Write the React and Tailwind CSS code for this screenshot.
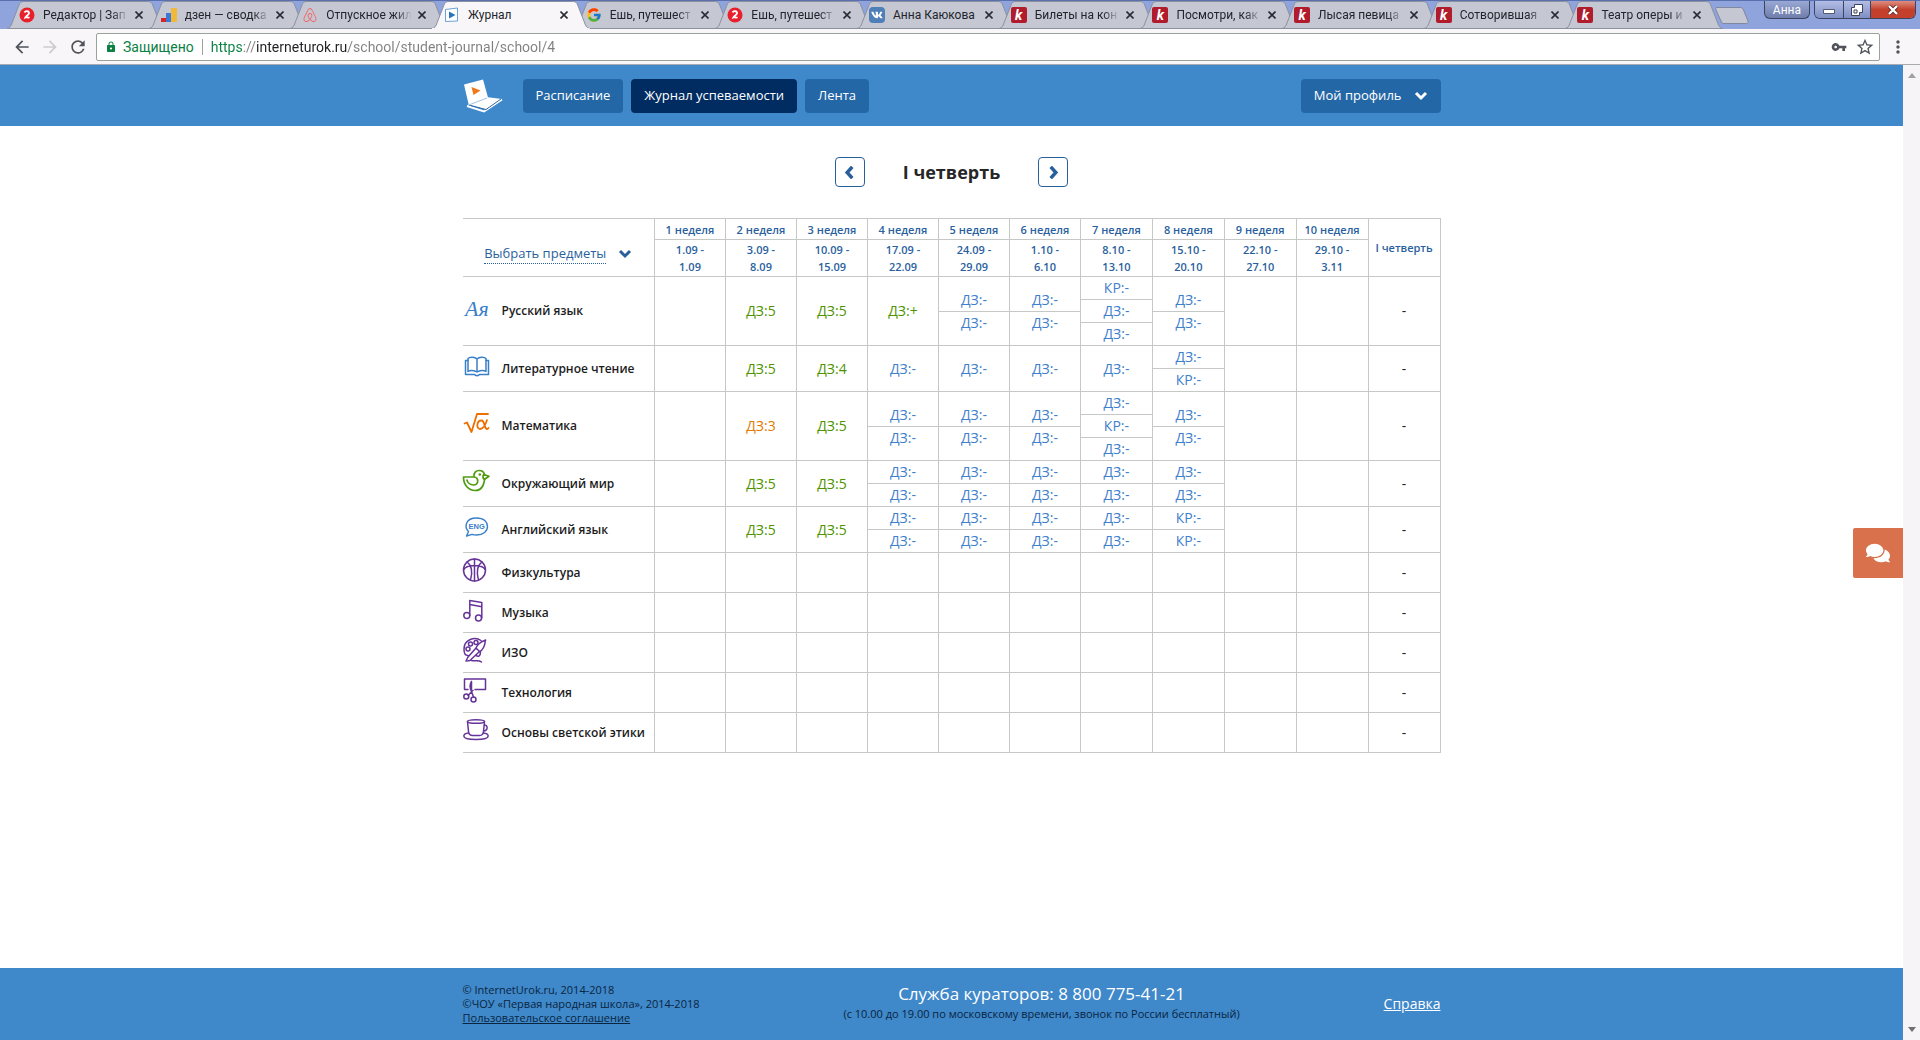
import React from 'react';
import { FcGoogle } from 'react-icons/fc';
import { FaAirbnb, FaComments, FaVk } from 'react-icons/fa';
import {
  MdArrowBack,
  MdArrowForward,
  MdLock,
  MdMoreVert,
  MdRefresh,
  MdStarBorder,
  MdVpnKey,
} from 'react-icons/md';

const browserTabs = [
  { icon: 'zen', title: 'Редактор | Зап', long: true },
  { icon: 'stats', title: 'дзен — сводка', long: true },
  { icon: 'airbnb', title: 'Отпускное жил', long: true },
  { icon: 'journal', title: 'Журнал', active: true },
  { icon: 'google', title: 'Ешь, путешест', long: true },
  { icon: 'zen', title: 'Ешь, путешест', long: true },
  { icon: 'vk', title: 'Анна Каюкова' },
  { icon: 'kudago', title: 'Билеты на кон', long: true },
  { icon: 'kudago', title: 'Посмотри, как', long: true },
  { icon: 'kudago', title: 'Лысая певица', long: true },
  { icon: 'kudago', title: 'Сотворившая', long: true },
  { icon: 'kudago', title: 'Театр оперы и', long: true },
];

const weeks = [
  { name: '1 неделя', from: '1.09 -', to: '1.09' },
  { name: '2 неделя', from: '3.09 -', to: '8.09' },
  { name: '3 неделя', from: '10.09 -', to: '15.09' },
  { name: '4 неделя', from: '17.09 -', to: '22.09' },
  { name: '5 неделя', from: '24.09 -', to: '29.09' },
  { name: '6 неделя', from: '1.10 -', to: '6.10' },
  { name: '7 неделя', from: '8.10 -', to: '13.10' },
  { name: '8 неделя', from: '15.10 -', to: '20.10' },
  { name: '9 неделя', from: '22.10 -', to: '27.10' },
  { name: '10 неделя', from: '29.10 -', to: '3.11' },
];

const DZ = 'ДЗ:-';
const KR = 'КР:-';

const subjects = [
  {
    name: 'Русский язык',
    icon: 'russian',
    height: 'h-[69px]',
    marks: [[], ['ДЗ:5'], ['ДЗ:5'], ['ДЗ:+'], [DZ, DZ], [DZ, DZ], [KR, DZ, DZ], [DZ, DZ], [], []],
  },
  {
    name: 'Литературное чтение',
    icon: 'book',
    height: 'h-[46px]',
    marks: [[], ['ДЗ:5'], ['ДЗ:4'], [DZ], [DZ], [DZ], [DZ], [DZ, KR], [], []],
  },
  {
    name: 'Математика',
    icon: 'math',
    height: 'h-[69px]',
    marks: [[], ['ДЗ:3'], ['ДЗ:5'], [DZ, DZ], [DZ, DZ], [DZ, DZ], [DZ, KR, DZ], [DZ, DZ], [], []],
  },
  {
    name: 'Окружающий мир',
    icon: 'bird',
    height: 'h-[46px]',
    marks: [[], ['ДЗ:5'], ['ДЗ:5'], [DZ, DZ], [DZ, DZ], [DZ, DZ], [DZ, DZ], [DZ, DZ], [], []],
  },
  {
    name: 'Английский язык',
    icon: 'english',
    height: 'h-[46px]',
    marks: [[], ['ДЗ:5'], ['ДЗ:5'], [DZ, DZ], [DZ, DZ], [DZ, DZ], [DZ, DZ], [KR, KR], [], []],
  },
  { name: 'Физкультура', icon: 'ball', height: 'h-[40px]', marks: Array(10).fill([]) },
  { name: 'Музыка', icon: 'music', height: 'h-[40px]', marks: Array(10).fill([]) },
  { name: 'ИЗО', icon: 'art', height: 'h-[40px]', marks: Array(10).fill([]) },
  { name: 'Технология', icon: 'craft', height: 'h-[40px]', marks: Array(10).fill([]) },
  { name: 'Основы светской этики', icon: 'cup', height: 'h-[40px]', marks: Array(10).fill([]) },
];

function markColor(mark) {
  if (mark.endsWith('-')) return 'text-[#3f80cc]';
  if (mark.endsWith('3')) return 'text-[#e07b00]';
  return 'text-[#4f9400]';
}

function Chevron({ className, d = 'M2 3l5 5 5-5' }) {
  return (
    <svg viewBox="0 0 14 11" className={className} fill="none" stroke="currentColor" strokeWidth="3">
      <path d={d} />
    </svg>
  );
}

function Favicon({ name }) {
  switch (name) {
    case 'zen':
      return (
        <svg viewBox="0 0 16 16" className="size-4 shrink-0">
          <circle cx="8" cy="8" r="7.5" fill="#e8202c" />
          <path d="M5.500 5.500c1-2 5-1.600 4.500.9C9.700 8 7 8.300 6.300 10.500c1.500-.8 2.500.8 4.200-.2" fill="none" stroke="#fff" strokeWidth="1.800" />
        </svg>
      );
    case 'stats':
      return (
        <svg viewBox="0 0 16 16" className="size-4 shrink-0">
          <path d="M0 11h5v4H0z" fill="#d8232a" />
          <path d="M5 6h5v9H5z" fill="#3b78d8" />
          <path d="M10 1h6v14h-6z" fill="#f0b93a" />
        </svg>
      );
    case 'airbnb':
      return <FaAirbnb className="size-4 shrink-0 text-[#f0686c]" />;
    case 'journal':
      return (
        <svg viewBox="0 0 16 16" className="size-4 shrink-0">
          <path d="M1.500 2.500l12-1.500v13l-12 .5z" fill="#fff" stroke="#6ba3d8" />
          <path d="M5 4.500l6.500 3.500L5 11.500z" fill="#2b72b8" />
        </svg>
      );
    case 'google':
      return <FcGoogle className="size-4 shrink-0" />;
    case 'vk':
      return (
        <span className="flex size-4 shrink-0 items-center justify-center rounded-sm bg-[#4f7fb8]">
          <FaVk className="size-3 text-white" />
        </span>
      );
    default:
      return (
        <span className="flex size-4 shrink-0 items-center justify-center rounded-xs bg-[#b01c2c] pb-px text-sm/4 font-bold text-white italic">
          k
        </span>
      );
  }
}

function BrowserTab({ tab }) {
  return (
    <div className={`relative h-7 min-w-0 flex-1 ${tab.active ? 'z-10' : ''}`}>
      <svg
        viewBox="0 0 158 28"
        preserveAspectRatio="none"
        className="absolute top-0 -left-2 h-full w-[calc(100%+16px)]"
      >
        <path
          d="M0 27.500C3 27 4 25 5 22L12 4C13 1.500 14 .5 17 .5H141C144 .5 145 1.500 146 4L153 22C154 25 155 27 158 27.500"
          fill={tab.active ? '#f8f6f9' : '#c5c8d2'}
          stroke="#8b90a0"
        />
        <path d="M0 27.500H158" stroke={tab.active ? '#f8f6f9' : '#8b90a0'} />
      </svg>
      <div className="relative flex h-full items-center pr-3 pl-1">
        <button className="flex min-w-0 flex-1 items-center gap-2 text-left text-xs text-[#22242c]">
          <Favicon name={tab.icon} />
          <span className={`flex-1 whitespace-nowrap ${tab.long ? 'mask-r-from-80%' : ''}`}>{tab.title}</span>
        </button>
        <button aria-label="Закрыть вкладку" className="ml-1 flex size-3 items-center justify-center">
          <svg viewBox="0 0 8 8" className="size-2" stroke="#2a2c34" strokeWidth="1.600">
            <path d="M.5.5l7 7M7.500.5l-7 7" />
          </svg>
        </button>
      </div>
    </div>
  );
}

function WindowControls() {
  return (
    <div className="ml-auto flex items-start gap-1 pr-1">
      <button className="h-[18px] rounded-b-md border border-t-0 border-[#3c4460] bg-linear-to-b from-[#9aa8d4] to-[#6f7dac] px-2 text-xs/4 text-white">
        Анна
      </button>
      <div className="flex h-[18px] overflow-hidden rounded-b-md border border-t-0 border-[#3c4460]">
        <button aria-label="Свернуть" className="flex w-7 items-center justify-center bg-linear-to-b from-[#b3bee4] to-[#7f8fc4]">
          <svg viewBox="0 0 12 5" className="mt-1 h-[5px] w-3">
            <path d="M.5.5h11v4H.5z" fill="#fff" stroke="#555c70" />
          </svg>
        </button>
        <button aria-label="Развернуть" className="flex w-7 items-center justify-center border-x border-[#3c4460] bg-linear-to-b from-[#b3bee4] to-[#7f8fc4]">
          <svg viewBox="0 0 12 12" className="size-3" fill="none" stroke="#3c4460">
            <path d="M3.500.5h8v8h-3v3h-8v-8h3z" fill="#fff" />
            <path d="M3 6h3v3H3z" />
          </svg>
        </button>
        <button aria-label="Закрыть" className="flex w-11 items-center justify-center bg-linear-to-b from-[#dd8d80] via-[#c4402c] to-[#c4402c]">
          <svg viewBox="0 0 12 10" className="h-[10px] w-3">
            <path d="M2 1l8 8M10 1l-8 8" stroke="#5c2a2a" strokeWidth="4" />
            <path d="M2 1l8 8M10 1l-8 8" stroke="#fff" strokeWidth="2.400" />
          </svg>
        </button>
      </div>
    </div>
  );
}

function BrowserChrome() {
  return (
    <div className="font-['Roboto','Liberation_Sans',sans-serif]">
      <div className="flex border-t border-[#5a6fae] bg-[#8fa3dc] pl-[15px]">
        <div className="flex max-w-[1700px] flex-1">
          {browserTabs.map((tab, i) => (
            <BrowserTab key={i} tab={tab} />
          ))}
        </div>
        <button aria-label="Новая вкладка" className="self-center">
          <svg viewBox="0 0 34 17" className="h-[17px] w-[34px]">
            <path d="M2 .5h23c2 0 3 1 3.500 2.500l4.500 11c.5 1.500 0 2.500-1.500 2.500H9c-2 0-2.500-1-3-2.500L1 3C.5 1.500.5.5 2 .5z" fill="#c5c8d2" stroke="#8088a0" />
          </svg>
        </button>
        <WindowControls />
      </div>

      <div className="flex h-9 items-center border-b border-[#a8acb0] bg-[#f8f6f9] text-[#50535a]">
        <button aria-label="Назад" className="ml-3">
          <MdArrowBack className="size-5" />
        </button>
        <button aria-label="Вперёд" className="ml-2 text-[#cccccf]">
          <MdArrowForward className="size-5" />
        </button>
        <button aria-label="Обновить" className="ml-2">
          <MdRefresh className="size-5" />
        </button>
        <div className="ml-2 flex h-7 flex-1 items-center rounded-xs border border-[#9aa39a] bg-white pr-1 pl-2 text-sm">
          <MdLock className="size-3 text-[#0b8043]" />
          <span className="ml-1.5 text-[#0b8043]">Защищено</span>
          <span className="mx-2 h-4 w-px bg-[#a0a0a0]" />
          <input
            aria-label="Адресная строка"
            defaultValue="https://interneturok.ru/school/student-journal/school/4"
            className="min-w-0 flex-1 bg-[linear-gradient(90deg,#0b8043_0_32px,#808080_32px_46px,#202124_46px_137px,#808080_137px)] bg-clip-text text-transparent outline-none"
          />
          <MdVpnKey className="size-4" />
          <MdStarBorder className="ml-2 size-5" />
        </div>
        <button aria-label="Меню" className="mr-3 ml-2">
          <MdMoreVert className="size-5" />
        </button>
      </div>
    </div>
  );
}

function Scrollbar() {
  return (
    <div className="flex w-[17px] shrink-0 flex-col items-center justify-between bg-[#f6f4f7] py-1">
      <svg viewBox="0 0 8 5" className="mt-1 h-[5px] w-2">
        <path d="M0 5l4-5 4 5z" fill="#a0a0a4" />
      </svg>
      <svg viewBox="0 0 8 5" className="mb-1 h-[5px] w-2">
        <path d="M0 0l4 5 4-5z" fill="#707074" />
      </svg>
    </div>
  );
}

function SubjectIcon({ name }) {
  const common = {
    viewBox: '0 0 26 26',
    className: 'size-[26px] overflow-visible',
    fill: 'none',
    strokeWidth: 1.5,
    strokeLinejoin: 'round',
    strokeLinecap: 'round',
  };
  switch (name) {
    case 'russian':
      return (
        <svg {...common}>
          <text x="2" y="21" fill="#3a80c8" fontSize="22" fontStyle="italic" fontWeight="400" fontFamily="'Liberation Serif', serif">
            Ая
          </text>
        </svg>
      );
    case 'book':
      return (
        <svg {...common} stroke="#3a80c8">
          <path d="M14 6c2-2 7-2.500 9-.5v13c-2-1.500-6-1.500-9 .5-3-2-7-2-9-.5v-13c2-2 7-1.500 9 .5zM14 6v13" />
          <path d="M5 7.500H2.500v14h9c1 1.500 4 1.500 5 0h9v-14H23" />
        </svg>
      );
    case 'math':
      return (
        <svg {...common} stroke="#ee6f00" strokeWidth="1.800">
          <path d="M1.500 13.500l2.500-1 4.500 9.500L14 4h11" />
          <path d="M24 10c-1.500 5-4 9-7 9-4 0-3.500-8.500 1.500-8.500 3.500 0 2.500 8.500 5.500 8.500.8 0 1.200-.5 1.500-1" />
        </svg>
      );
    case 'bird':
      return (
        <svg {...common} stroke="#4f9c10" strokeWidth="1.700">
          <path d="M11 8.500C10.500 5 13 2.500 16.200 2.500c3 0 5 2 5.500 4.500.2 8-2 15.500-9.500 15.500C5 22.500.5 16.500.5 9H11c5 0 5 8-.5 8-3.500 0-6-2.500-6.500-5" />
          <path d="M20.500 6.500l5.500 1.800-4.700 3.200c-1.500-1.500-1.500-3.500-.8-5z" fill="#fff" />
          <circle cx="16.800" cy="6.500" r=".5" fill="#4f9c10" />
        </svg>
      );
    case 'english':
      return (
        <svg {...common} stroke="#3a80c8" strokeWidth="1.400">
          <path d="M5.500 17.500C1 13 2.500 4 13.500 4 21 4 24.500 8 24.500 12.500S20.500 21 13.500 21c-2 0-3-.2-4.500-.7L3.500 22z" />
          <text x="5.500" y="15.300" fill="#3a80c8" stroke="none" fontSize="7.500" fontWeight="700" fontFamily="'Liberation Sans', sans-serif">
            ENG
          </text>
        </svg>
      );
    case 'ball':
      return (
        <svg {...common} stroke="#663399">
          <circle cx="11.500" cy="13" r="11" />
          <path d="M11.500 2v22M4 5c4.500 3 6 10 3.500 18M19 5c-4.500 3-6 10-3.500 18M.8 12.500C4 7 19 7 22.200 12.500" />
        </svg>
      );
    case 'music':
      return (
        <svg {...common} stroke="#663399">
          <circle cx="3.800" cy="18.500" r="3" />
          <circle cx="15.500" cy="21" r="3" />
          <path d="M6.800 18.500v-15l12 2V21M6.800 7.500l12 2.200" />
        </svg>
      );
    case 'art':
      return (
        <svg {...common} stroke="#663399">
          <path d="M18 3.500C12-.5 1 2 1 12.500c0 4 2 6 4 6M22.500 3c-2.500 1-8 4-9.500 8l3.500 3.500c4-1.500 5.500-7 6-11.500zM13 11l-8 9-2 4c3 0 5-.5 5.500-2l8-7.500M17.500 15c0 4-2 5-4.500 3.500" />
          <circle cx="5" cy="12" r="2" />
          <circle cx="7.500" cy="7" r="2" />
          <circle cx="13" cy="5.500" r="2" />
          <path d="M8.500 23.500c4 1 7-1 10 1.500" />
        </svg>
      );
    case 'craft':
      return (
        <svg {...common} stroke="#663399">
          <path d="M5 12.500H1.500V2h21v10.500H12" />
          <path d="M8.500 4.500c-2 3-1.500 7 0 10l2 5.500M8.500 4.500V15l-3.500 3.500M10 13.500l-1.500 1" />
          <circle cx="3.300" cy="19.500" r="2.500" />
          <circle cx="10.500" cy="22.500" r="2.500" />
        </svg>
      );
    default:
      return (
        <svg {...common} stroke="#663399">
          <ellipse cx="13" cy="4.500" rx="8.500" ry="1.800" />
          <path d="M4.500 4.500l1 10c.3 2.500 2 4 4 4h7c2 0 3.700-1.500 4-4l1-10M21.200 8c4-.5 4 6-.8 6" />
          <path d="M5.500 16C2 16.500.8 17.500.8 19c0 2.500 5 3.500 12.200 3.500s12.200-1 12.200-3.500c0-1.500-1.200-2.500-4.700-3" />
        </svg>
      );
  }
}

function SiteHeader() {
  const button = 'h-[34px] rounded-sm px-[13px] text-[13px] text-white';
  return (
    <header className="flex h-[61px] items-center bg-[#3f88ca] px-4">
      <div className="mx-auto flex w-full max-w-[978px] items-center">
        <a href="#" aria-label="InternetUrok" className="mr-5">
          <svg viewBox="0 0 40 34" className="h-[34px] w-10">
            <path d="M1 5.500L20 .5l5 18L6 27z" fill="#fff" />
            <path d="M5 25.500l18-7.500 16 2-15 11z" fill="#fff" />
            <path d="M4 27l17 5.500L39 20.500" fill="none" stroke="#fff" strokeWidth="2" />
            <path d="M6 26l17 4.500L38 20" fill="none" stroke="#2b68a4" />
            <path d="M7 25.500l17-6.500" fill="none" stroke="#9fc2e2" />
            <path d="M8.500 8l9 3.500-7 4.500z" fill="#f07818" />
          </svg>
        </a>
        <nav className="flex gap-2">
          <button className={`${button} bg-[#2467a6]`}>Расписание</button>
          <button className={`${button} bg-[#002c62]`}>Журнал успеваемости</button>
          <button className={`${button} bg-[#2467a6]`}>Лента</button>
        </nav>
        <button className={`${button} ml-auto flex items-center gap-3 bg-[#2467a6]`}>
          Мой профиль
          <Chevron className="h-[11px] w-[14px]" />
        </button>
      </div>
    </header>
  );
}

function QuarterSwitch() {
  const arrow = 'flex size-[30px] items-center justify-center rounded-sm border border-[#285f9c] text-[#285f9c]';
  return (
    <div className="flex items-center justify-center gap-[38px]">
      <button aria-label="Предыдущая четверть" className={arrow}>
        <Chevron className="h-[13px] w-4" d="M9 .5l-4.500 5L9 10.500" />
      </button>
      <h1 className="text-lg/7 font-bold text-[#262626]">I четверть</h1>
      <button aria-label="Следующая четверть" className={arrow}>
        <Chevron className="h-[13px] w-4" d="M5 .5l4.500 5L5 10.500" />
      </button>
    </div>
  );
}

function JournalTable() {
  const border = 'border border-[#c6c8c6]';
  return (
    <table className="w-full table-fixed border-collapse">
      <colgroup>
        <col className="w-[192px]" />
        <col span={6} className="w-[71px]" />
        <col span={5} />
      </colgroup>
      <thead className="text-[11px]/[17px] text-[#2a5f9e]">
        <tr className="h-[21px]">
          <th rowSpan={2} className={`${border} border-l-0 p-0 pt-3 font-normal`}>
            <button className="inline-flex items-center gap-3 text-[13px]/5">
              <span className="border-b border-dotted border-[#2a5f9e]">Выбрать предметы</span>
              <Chevron className="h-[11px] w-[14px]" />
            </button>
          </th>
          {weeks.map((week) => (
            <th key={week.name} className={`${border} p-0 font-semibold`}>
              {week.name}
            </th>
          ))}
          <th rowSpan={2} className={`${border} p-0 font-semibold`}>
            I четверть
          </th>
        </tr>
        <tr className="h-[37px]">
          {weeks.map((week) => (
            <th key={week.name} className={`${border} p-0 font-semibold`}>
              {week.from}
              <br />
              {week.to}
            </th>
          ))}
        </tr>
      </thead>
      <tbody>
        {subjects.map((subject) => (
          <tr key={subject.name} className={subject.height}>
            <th className={`${border} border-l-0 p-0 text-left`}>
              <div className="flex items-center">
                <div className="w-[39px] shrink-0 pb-1.5">
                  <SubjectIcon name={subject.icon} />
                </div>
                <span className="text-xs/5 font-semibold whitespace-nowrap text-[#1c1c1c]">{subject.name}</span>
              </div>
            </th>
            {subject.marks.map((marks, i) => (
              <td key={i} className={`${border} p-0 text-center text-sm/[22px]`}>
                <div className="divide-y divide-[#c6c8c6]">
                  {marks.map((mark, j) => (
                    <div key={j} className={markColor(mark)}>
                      {mark}
                    </div>
                  ))}
                </div>
              </td>
            ))}
            <td className={`${border} p-0 text-center text-sm text-[#262626]`}>-</td>
          </tr>
        ))}
      </tbody>
    </table>
  );
}

function SiteFooter() {
  return (
    <footer className="flex h-[72px] items-center bg-[#3f88ca] px-4">
      <div className="mx-auto flex w-full max-w-[978px] items-center justify-between">
        <div className="text-[11px]/[14px] text-[#0a2540]">
          <p>© InternetUrok.ru, 2014-2018</p>
          <p>©ЧОУ «Первая народная школа», 2014-2018</p>
          <a href="#" className="underline">
            Пользовательское соглашение
          </a>
        </div>
        <div className="text-center">
          <p className="text-[17px]/5 text-white">Служба кураторов: 8 800 775-41-21</p>
          <p className="text-[11px]/5 text-[#0a2540]">
            (с 10.00 до 19.00 по московскому времени, звонок по России бесплатный)
          </p>
        </div>
        <a href="#" className="text-sm text-white underline">
          Справка
        </a>
      </div>
    </footer>
  );
}

export default function App() {
  return (
    <div className="flex min-h-screen flex-col bg-white">
      <BrowserChrome />
      <div className="flex flex-1">
        <div className="relative flex min-w-0 flex-1 flex-col font-['Open_Sans','Noto_Sans',sans-serif]">
          <SiteHeader />
          <main className="mx-auto w-full max-w-[978px] flex-1 pt-[31px]">
            <QuarterSwitch />
            <div className="mt-[31px]">
              <JournalTable />
            </div>
          </main>
          <SiteFooter />
          <button
            aria-label="Чат"
            className="absolute top-[463px] right-0 flex h-[50px] w-[50px] items-center justify-center rounded-l-xs bg-[#d8714c] text-white"
          >
            <FaComments className="size-6" />
          </button>
        </div>
        <Scrollbar />
      </div>
    </div>
  );
}
